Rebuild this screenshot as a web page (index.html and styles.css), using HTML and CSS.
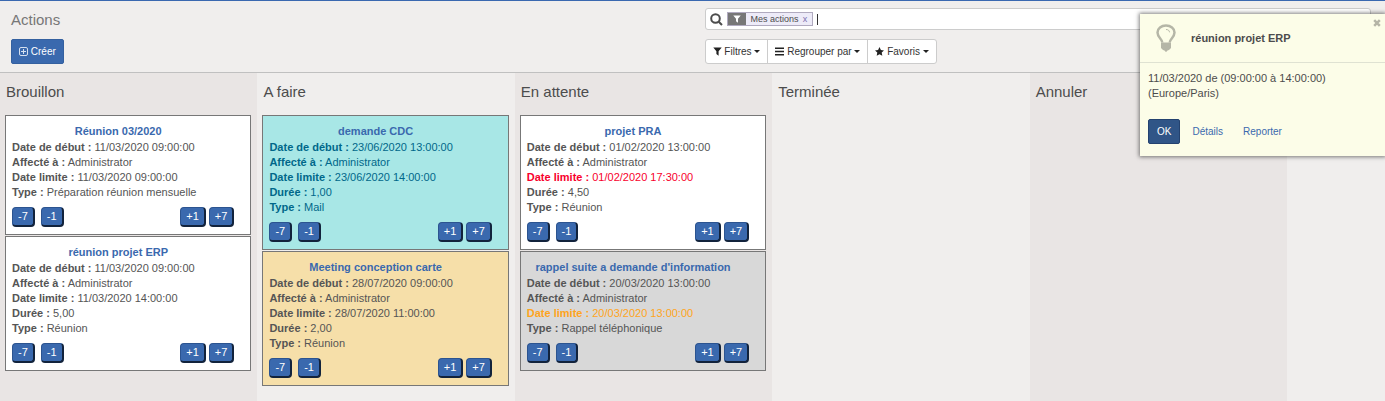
FILE: index.html
```html
<!DOCTYPE html>
<html lang="fr">
<head>
    <meta charset="UTF-8">
    <meta name="viewport" content="width=device-width, initial-scale=1.0">
    <title>Actions</title>
    <link rel="stylesheet" href="styles.css">
</head>
<body>
    <header class="control-panel">
        <div class="panel-left">
            <h1>Actions</h1>
            <button type="button" class="btn btn-primary">
                <svg class="icon-plus" viewBox="0 0 9 9"><rect x=".5" y=".5" width="8" height="8" rx="1.5"/><path d="M2 4.5h5M4.500 2v5"/></svg>
                Créer
            </button>
        </div>
        <div class="panel-right">
            <div class="search">
                <svg class="icon-search" viewBox="0 0 13 13"><circle cx="5.500" cy="5.500" r="4.300"/><path d="M8.700 8.700l3.300 3.300"/></svg>
                <div class="facet">
                    <span class="facet-icon"><svg viewBox="0 0 9 9"><path d="M.3.5h8.400L5.600 4.200V8.800L3.400 7V4.200z"/></svg></span>
                    <span class="facet-label">Mes actions</span>
                    <button type="button" class="facet-remove" aria-label="Retirer">x</button>
                </div>
                <span class="caret-bar"></span>
                <input type="text" class="search-input" aria-label="Recherche">
            </div>
            <div class="btn-group">
                <button type="button">
                    <svg viewBox="0 0 9 9"><path d="M.3.500h8.400L5.600 4.200V8.800L3.400 7V4.200z"/></svg>
                    Filtres <i class="arrow"></i>
                </button>
                <button type="button">
                    <svg viewBox="0 0 9 9"><path d="M0 .5h9v1.400H0zM0 3.800h9v1.400H0zM0 7.100h9v1.400H0z"/></svg>
                    Regrouper par <i class="arrow"></i>
                </button>
                <button type="button">
                    <svg viewBox="0 0 9 9"><path d="M4.500 0l1.400 2.900 3.100.5-2.300 2.200.6 3.200-2.800-1.500-2.800 1.500.6-3.200L0 3.400l3.100-.5z"/></svg>
                    Favoris <i class="arrow"></i>
                </button>
            </div>
        </div>
    </header>

    <main class="kanban">
        <section class="column">
            <h2>Brouillon</h2>
            <article class="card">
                <h3>Réunion 03/2020</h3>
                <p><b>Date de début :</b> 11/03/2020 09:00:00</p>
                <p><b>Affecté à :</b> Administrator</p>
                <p><b>Date limite :</b> 11/03/2020 09:00:00</p>
                <p><b>Type :</b> Préparation réunion mensuelle</p>
                <div class="shift">
                    <button type="button">-7</button>
                    <button type="button">-1</button>
                    <button type="button" class="plus">+1</button>
                    <button type="button">+7</button>
                </div>
            </article>
            <article class="card">
                <h3>réunion projet ERP</h3>
                <p><b>Date de début :</b> 11/03/2020 09:00:00</p>
                <p><b>Affecté à :</b> Administrator</p>
                <p><b>Date limite :</b> 11/03/2020 14:00:00</p>
                <p><b>Durée :</b> 5,00</p>
                <p><b>Type :</b> Réunion</p>
                <div class="shift">
                    <button type="button">-7</button>
                    <button type="button">-1</button>
                    <button type="button" class="plus">+1</button>
                    <button type="button">+7</button>
                </div>
            </article>
        </section>

        <section class="column">
            <h2>A faire</h2>
            <article class="card card-cyan">
                <h3>demande CDC</h3>
                <p><b>Date de début :</b> 23/06/2020 13:00:00</p>
                <p><b>Affecté à :</b> Administrator</p>
                <p><b>Date limite :</b> 23/06/2020 14:00:00</p>
                <p><b>Durée :</b> 1,00</p>
                <p><b>Type :</b> Mail</p>
                <div class="shift">
                    <button type="button">-7</button>
                    <button type="button">-1</button>
                    <button type="button" class="plus">+1</button>
                    <button type="button">+7</button>
                </div>
            </article>
            <article class="card card-yellow">
                <h3>Meeting conception carte</h3>
                <p><b>Date de début :</b> 28/07/2020 09:00:00</p>
                <p><b>Affecté à :</b> Administrator</p>
                <p><b>Date limite :</b> 28/07/2020 11:00:00</p>
                <p><b>Durée :</b> 2,00</p>
                <p><b>Type :</b> Réunion</p>
                <div class="shift">
                    <button type="button">-7</button>
                    <button type="button">-1</button>
                    <button type="button" class="plus">+1</button>
                    <button type="button">+7</button>
                </div>
            </article>
        </section>

        <section class="column">
            <h2>En attente</h2>
            <article class="card">
                <h3>projet PRA</h3>
                <p><b>Date de début :</b> 01/02/2020 13:00:00</p>
                <p><b>Affecté à :</b> Administrator</p>
                <p class="late"><b>Date limite :</b> 01/02/2020 17:30:00</p>
                <p><b>Durée :</b> 4,50</p>
                <p><b>Type :</b> Réunion</p>
                <div class="shift">
                    <button type="button">-7</button>
                    <button type="button">-1</button>
                    <button type="button" class="plus">+1</button>
                    <button type="button">+7</button>
                </div>
            </article>
            <article class="card card-grey">
                <h3>rappel suite a demande d'information</h3>
                <p><b>Date de début :</b> 20/03/2020 13:00:00</p>
                <p><b>Affecté à :</b> Administrator</p>
                <p class="soon"><b>Date limite :</b> 20/03/2020 13:00:00</p>
                <p><b>Type :</b> Rappel téléphonique</p>
                <div class="shift">
                    <button type="button">-7</button>
                    <button type="button">-1</button>
                    <button type="button" class="plus">+1</button>
                    <button type="button">+7</button>
                </div>
            </article>
        </section>

        <section class="column">
            <h2>Terminée</h2>
        </section>

        <section class="column">
            <h2>Annuler</h2>
        </section>
    </main>

    <aside class="notification">
        <button type="button" class="close" aria-label="Fermer"><svg viewBox="0 0 8 8"><path d="M1.200 1.200l5.600 5.600M6.800 1.200L1.200 6.800"/></svg></button>
        <div class="notification-title">
            <svg class="icon-bulb" viewBox="0 0 20 28">
                <path class="glass" d="M6.300 18.500c0-3.500-4.800-5-4.800-10C1.500 4.300 5.300 1.500 10 1.500s8.500 2.800 8.500 7c0 5-4.800 6.500-4.800 10"/>
                <path class="shine" d="M10 5.500c2 0 3.500 1 3.500 2.800"/>
                <path class="base" d="M5 18.500h10v5.500l-2 2-1.500.5-1 1.200h-1l-1-1.200L7 26l-2-2z"/>
            </svg>
            <strong>réunion projet ERP</strong>
        </div>
        <div class="notification-content">
            <p>11/03/2020 de (09:00:00 à 14:00:00) (Europe/Paris)</p>
            <div class="notification-actions">
                <button type="button" class="btn btn-ok">OK</button>
                <a href="#">Détails</a>
                <a href="#">Reporter</a>
            </div>
        </div>
    </aside>
</body>
</html>
```

FILE: styles.css
```css
* {
    margin: 0;
    padding: 0;
    box-sizing: border-box;
}
body {
    display: flex;
    flex-direction: column;
    min-height: 100vh;
    border-top: 1px solid #3a68b0;
    background: #f0eeed;
    color: #4c4c4c;
    font-family: "Liberation Sans", Arial, sans-serif;
    font-size: 11px;
    line-height: 15px;
}
button, input {
    font: inherit;
    color: inherit;
}

/* control panel */
.control-panel {
    display: flex;
    padding: 7px 14px 8px 11px;
    border-bottom: 1px solid #c0c0c0;
}
.panel-left {
    width: 51%;
}
.panel-right {
    flex: 1;
}
h1 {
    margin-bottom: 7px;
    color: #777;
    font-size: 15px;
    font-weight: normal;
    line-height: 24px;
}
.btn {
    height: 25px;
    padding: 0 8px;
    border: 1px solid #34609f;
    border-radius: 2px;
    background: #3a69ae;
    color: white;
    font-size: 10px;
}
.btn-primary {
    padding: 0 7px;
}
.icon-plus {
    width: 9px;
    height: 9px;
    vertical-align: -1px;
    fill: none;
    stroke: #d5e0f0;
}
.search {
    display: flex;
    align-items: center;
    height: 22px;
    margin-bottom: 9px;
    padding: 0 4px;
    border: 1px solid #ccc;
    border-radius: 3px;
    background: white;
}
.icon-search {
    width: 13px;
    height: 13px;
    margin-right: 4px;
    fill: none;
    stroke: #4c4c4c;
    stroke-width: 2;
}
.facet {
    display: flex;
    height: 14px;
    border: 1px solid #b0aabf;
    background: #edebf8;
    font-size: 9px;
    line-height: 12px;
}
.facet-icon {
    display: flex;
    align-items: center;
    padding: 0 5px;
    background: #777;
}
.facet-icon svg {
    width: 8px;
    height: 8px;
    fill: white;
}
.facet-label {
    padding-left: 5px;
}
.facet-remove {
    padding: 0 5px 0 4px;
    border: 0;
    background: none;
    color: #7c6fae;
    line-height: 12px;
}
.caret-bar {
    width: 1px;
    height: 11px;
    margin-left: 4px;
    background: #333;
}
.search-input {
    flex: 1;
    min-width: 0;
    border: 0;
    outline: none;
    background: none;
}
.btn-group {
    display: inline-flex;
    border: 1px solid #ccc;
    border-radius: 3px;
    background: white;
}
.btn-group button {
    height: 23px;
    padding: 0 7px;
    border: 0;
    background: none;
    color: #333;
    font-size: 10px;
}
.btn-group button + button {
    border-left: 1px solid #ccc;
}
.btn-group svg {
    width: 9px;
    height: 9px;
    vertical-align: -1px;
    fill: #222;
}
.arrow {
    display: inline-block;
    border: 3px solid transparent;
    border-top-color: #222;
    border-bottom: 0;
    vertical-align: 2px;
}

/* kanban */
.kanban {
    display: flex;
    flex: 1;
    padding-right: 98px;
}
.column {
    flex: 1;
    padding: 9px 6px 16px 5px;
}
.column:nth-child(odd) {
    background: #e9e5e4;
}
h2 {
    margin: 0 1px 13px;
    font-size: 15px;
    font-weight: normal;
    line-height: 20px;
}
.card {
    margin-bottom: 1px;
    padding: 8px 6px 7px;
    border: 1px solid #777;
    background: white;
    color: #555;
}
.card h3 {
    margin: 0 20px 1px 0;
    color: #3a69ae;
    font-size: 11px;
    text-align: center;
}
.card-cyan {
    background: #a8e7e6;
    color: #00678a;
}
.card-yellow {
    background: #f6dfa9;
}
.card-grey {
    background: #d8d8d8;
}
.late {
    color: #f8002c;
}
.soon {
    color: #ffa41c;
}
.shift {
    display: flex;
    gap: 6px;
    margin: 7px 10px 0 0;
}
.shift button {
    height: 20px;
    padding: 0 5px;
    border: 2px outset #2c5490;
    border-top-width: 1px;
    border-left-width: 1px;
    border-radius: 4px;
    background: #3a69ae;
    color: white;
}
.shift .plus {
    margin: 0 -3px 0 auto;
}

/* notification */
.notification {
    position: absolute;
    top: 14px;
    right: 0;
    width: 245px;
    background: #fcfde8;
    box-shadow: 0 0 4px 1px rgba(0, 0, 0, 0.5);
}
.close {
    position: absolute;
    top: 5px;
    right: 4px;
    border: 0;
    background: none;
    line-height: 0;
}
.close svg {
    width: 8px;
    height: 8px;
    stroke: #b5b5a6;
    stroke-width: 2.5;
}
.notification-title {
    display: flex;
    align-items: center;
    gap: 15px;
    height: 49px;
    padding-left: 16px;
    border-bottom: 1px solid #dfe2d2;
}
.icon-bulb {
    width: 20px;
    height: 28px;
    fill: #b5b6a7;
}
.icon-bulb .glass {
    fill: none;
    stroke: #b5b6a7;
    stroke-width: 2.5;
}
.icon-bulb .shine {
    fill: none;
    stroke: #b5b6a7;
}
.notification-content {
    padding: 8px 50px 12px 8px;
}
.notification-actions {
    display: flex;
    align-items: center;
    gap: 20px;
    margin-top: 18px;
    font-size: 10px;
}
.notification-actions a {
    color: #3a69ae;
    text-decoration: none;
}
.btn-ok {
    margin-right: -8px;
    border-color: #24426f;
    background: #305587;
}
```
